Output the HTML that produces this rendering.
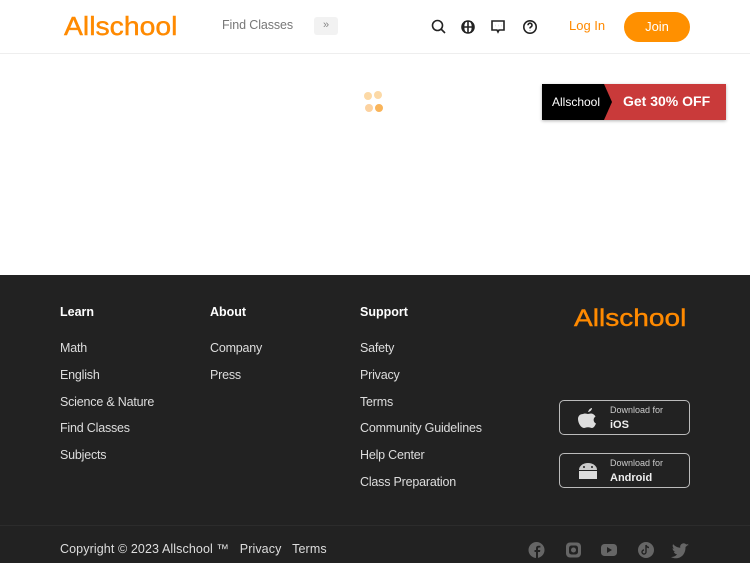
<!DOCTYPE html>
<html><head><meta charset="utf-8"><style>
*{margin:0;padding:0;box-sizing:border-box}
body{width:750px;height:563px;overflow:hidden;background:#fff;font-family:"Liberation Sans",sans-serif;position:relative}
.a{position:absolute}
.logo{font-weight:400;color:#ff8a00;letter-spacing:0px;-webkit-text-stroke:0.4px #ff8a00}
.f{color:#ddd;font-size:12.5px;letter-spacing:-0.2px}
.h{color:#fff;font-size:12.5px;font-weight:bold}
.btn{position:absolute;left:559px;width:131px;height:35px;border:1px solid #bbb;border-radius:5px}
.btn .s{position:absolute;left:50px;top:4px;font-size:9px;color:#ccc}
.btn .b{position:absolute;left:50px;top:18px;font-size:11px;font-weight:bold;color:#eee}
</style></head><body>
<div class="a logo" style="left:64px;top:11px;font-size:26px;transform:scaleX(1.09);transform-origin:left">Allschool</div>
<div class="a" style="left:222px;top:18px;font-size:12.5px;color:#777;letter-spacing:-0.1px">Find Classes</div>
<div class="a" style="left:314px;top:17px;width:24px;height:18px;background:#f2f2f2;border-radius:3px;color:#888;font-size:11px;text-align:center;line-height:17px">»</div>
<svg class="a" style="left:431px;top:19px" width="110" height="16" fill="none" stroke="#222" stroke-width="1.6">
<circle cx="6.5" cy="6.5" r="5"/><path d="M10 10l4 4"/>
<circle cx="37" cy="8" r="6"/><path d="M31 8h12M37 2v12M34 2.5c-2 3-2 8 0 11M40 2.5c2 3 2 8 0 11"/>
<path d="M61 2h12v9h-5l-1 2-1-2h-5z"/><path d="M64 6.5h.1M67 6.5h.1M70 6.5h.1" stroke-width="1.8"/>
<circle cx="99" cy="8" r="6.2"/><path d="M97 6.2a2 2 0 1 1 2.6 1.9c-.6.3-.6.7-.6 1.4M99 11.4v.2"/>
</svg>
<div class="a" style="left:569px;top:18px;font-size:13px;color:#ff8a00">Log In</div>
<div class="a" style="left:624px;top:12px;width:66px;height:30px;background:#ff9000;border-radius:15px;color:#fff;font-size:13px;text-align:center;line-height:29px">Join</div>
<div class="a" style="left:0;top:53px;width:750px;height:1px;background:#eee"></div>
<svg class="a" style="left:362px;top:90px" width="28" height="26"><circle cx="6" cy="6" r="4" fill="#fcd9a6"/><circle cx="16" cy="5" r="4" fill="#fcd9a6"/><circle cx="7" cy="18" r="4" fill="#fcd2a0"/><circle cx="17" cy="18" r="4" fill="#f9b45a"/></svg>
<div class="a" style="left:542px;top:84px;width:184px;height:36px;background:#c93a3a;box-shadow:0 1px 3px rgba(0,0,0,.3)">
<svg class="a" style="left:0;top:0" width="72" height="36"><path d="M0 0h62l8 18-8 18H0z" fill="#000"/></svg>
<div class="a" style="left:10px;top:11px;font-size:12px;color:#fff">Allschool</div>
<div class="a" style="left:81px;top:9px;font-size:14px;color:#fff;font-weight:bold">Get 30% OFF</div>
</div>
<div class="a" style="left:0;top:275px;width:750px;height:288px;background:#222"></div>
<div class="a h" style="left:60px;top:305px">Learn</div>
<div class="a h" style="left:210px;top:305px">About</div>
<div class="a h" style="left:360px;top:305px">Support</div>
<div class="a f" style="left:60px;top:335px;line-height:26.8px">Math<br>English<br>Science &amp; Nature<br>Find Classes<br>Subjects</div>
<div class="a f" style="left:210px;top:335px;line-height:26.8px">Company<br>Press</div>
<div class="a f" style="left:360px;top:335px;line-height:26.8px">Safety<br>Privacy<br>Terms<br>Community Guidelines<br>Help Center<br>Class Preparation</div>
<div class="a logo" style="left:574px;top:305px;font-size:24px;transform:scaleX(1.17);transform-origin:left">Allschool</div>
<div class="btn" style="top:400px"><svg class="a" style="left:18px;top:6px" width="20" height="22"><path d="M10 5c1-3 3-4 4-4 0 2-2 4-4 4zM5 7c2-1 4 0 5 0s3-1 5 0c1 .5 2 1.5 2.5 2.5-3 2-2 6 .5 7-1 2.5-2.5 4.5-4 4.5-1 0-2-.7-4-.7s-3 .7-4 .7C3 21 0 16 0 12c0-3 2-5 5-5z" fill="#ddd"/></svg><div class="s">Download for</div><div class="b">iOS</div></div>
<div class="btn" style="top:453px"><svg class="a" style="left:18px;top:6px" width="20" height="22"><path d="M1 10a9 7 0 0 1 18 0z" fill="#ccc"/><rect x="1" y="11" width="18" height="8" fill="#ddd"/><circle cx="6" cy="7" r="1" fill="#222"/><circle cx="14" cy="7" r="1" fill="#222"/></svg><div class="s">Download for</div><div class="b">Android</div></div>
<div class="a" style="left:0;top:525px;width:750px;height:1px;background:#2c2c2c"></div>
<div class="a f" style="left:60px;top:542px;letter-spacing:0.1px">Copyright © 2023 Allschool ™ &nbsp;&nbsp;Privacy &nbsp;&nbsp;Terms</div>
<svg class="a" style="left:528px;top:541px" width="165" height="18" fill="#666">
<circle cx="8.5" cy="9" r="8"/><path d="M10 17v-6h2l.3-2H10V7.5c0-.6.3-1 1-1h1.4V4.7H10.5C8.8 4.7 8 5.8 8 7.3V9H6.5v2H8v6z" fill="#222"/>
<rect x="38" y="1.5" width="15" height="15" rx="4"/><rect x="41" y="4.5" width="9" height="9" rx="2.5" fill="#222"/><circle cx="45.5" cy="9" r="2.5"/>
<rect x="73" y="3" width="16" height="12" rx="3.5"/><path d="M79 6v6l5-3z" fill="#222"/>
<circle cx="118" cy="9" r="8"/><path d="M118 4v7a2 2 0 1 1-2-2M118 4c.5 1.5 1.5 2.5 3 2.5" stroke="#222" stroke-width="1.4" fill="none"/>
<path d="M161 4c-.7.3-1.3.4-2 .5.7-.4 1.2-1 1.5-1.8-.7.4-1.4.7-2.2.8a3.5 3.5 0 0 0-6 3.2c-2.9-.1-5.5-1.5-7.2-3.6-.9 1.6-.4 3.6 1.1 4.6-.6 0-1.1-.2-1.6-.4 0 1.7 1.2 3.2 2.8 3.5-.5.1-1.1.2-1.6.1.5 1.4 1.8 2.4 3.3 2.4A7 7 0 0 1 143 16c6.5 3.6 14.5-.5 14.5-9.5V6c.7-.5 1.3-1.1 1.8-1.8z"/>
</svg>
</body></html>
